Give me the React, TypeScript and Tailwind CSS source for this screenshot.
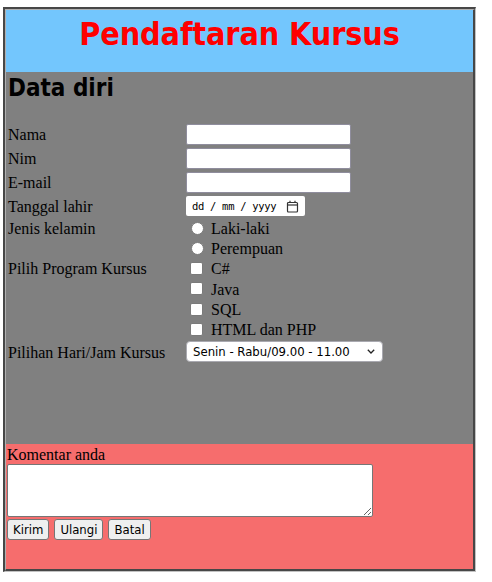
import React from "react";

const serif = { fontFamily: '"Liberation Serif", "Times New Roman", serif' };

function Radio() {
  return <span className="inline-block w-[13px] h-[13px] rounded-full bg-white border border-[#7a7a7a] ml-[5px] mr-[7px] shrink-0" />;
}
function Check() {
  return <span className="inline-block w-[13px] h-[13px] rounded-[2px] bg-white border border-[#7a7a7a] ml-[4px] mr-[8px] shrink-0" />;
}

export default function App() {
  return (
    <div className="ml-[3px] mt-[7px] w-[473px] h-[565px] border-t-2 border-l-2 border-r border-b border-t-[#474747] border-l-[#474747] border-r-[#c2c2c2] border-b-[#c2c2c2]">
      <div className="h-full flex flex-col border-t border-l border-r-2 border-b-2 border-t-[#b0b0b0] border-l-[#b0b0b0] border-r-[#474747] border-b-[#474747]">
        <header className="h-[62px] bg-[#73c6fd] flex justify-center">
          <h1
            className="text-[32px] font-bold text-[#ff0000] leading-[38px] mt-[5px] tracking-[-0.1px]"
            style={{ fontFamily: '"DejaVu Sans Condensed", "DejaVu Sans", Verdana, sans-serif' }}
          >
            Pendaftaran Kursus
          </h1>
        </header>

        <section className="h-[372px] bg-[#808080] text-black text-[16px]" style={serif}>
          <h2
            className="text-[24px] font-bold leading-[30px] pl-[2px] pt-[1px]"
            style={{ fontFamily: '"DejaVu Sans Condensed", "DejaVu Sans", Verdana, sans-serif' }}
          >
            Data diri
          </h2>
          <div className="mt-[19px] grid grid-cols-[180px_1fr] leading-[18px]">
            <div className="h-[24px] flex items-center pl-[2px] pt-[2px]">Nama</div>
            <div className="h-[24px] flex items-center">
              <input type="text" className="w-[165px] h-[21px] bg-white border border-[#8f8d9d] rounded-[2px]" />
            </div>
            <div className="h-[24px] flex items-center pl-[2px] pt-[2px]">Nim</div>
            <div className="h-[24px] flex items-center">
              <input type="text" className="w-[165px] h-[21px] bg-white border border-[#8f8d9d] rounded-[2px]" />
            </div>
            <div className="h-[24px] flex items-center pl-[2px] pt-[2px]">E-mail</div>
            <div className="h-[24px] flex items-center">
              <input type="email" className="w-[165px] h-[21px] bg-white border border-[#8f8d9d] rounded-[2px]" />
            </div>
            <div className="h-[24px] flex items-center pl-[2px] pt-[2px]">Tanggal lahir</div>
            <div className="h-[24px] flex items-center">
              <div className="w-[119px] h-[20px] bg-white rounded-[2px] flex items-center pl-[6px] pr-[6px] justify-between">
                <span className="text-[10.5px] text-black tracking-[-0.3px]" style={{ fontFamily: '"DejaVu Sans Mono", monospace' }}>
                  dd / mm / yyyy
                </span>
                <svg width="13" height="13" viewBox="0 0 13 13" fill="none" stroke="#333" strokeWidth="1.2">
                  <rect x="1.5" y="2.5" width="10" height="9.5" rx="1" />
                  <line x1="1.5" y1="5" x2="11.5" y2="5" />
                  <line x1="4" y1="0.8" x2="4" y2="3" />
                  <line x1="9" y1="0.8" x2="9" y2="3" />
                </svg>
              </div>
            </div>

            <div className="h-[20px] flex items-center pl-[2px] pt-[2px]">Jenis kelamin</div>
            <div className="h-[20px] flex items-center"><Radio /><span className="pt-[2px]">Laki-laki</span></div>
            <div className="h-[20px]" />
            <div className="h-[20px] flex items-center"><Radio /><span className="pt-[2px]">Perempuan</span></div>

            <div className="h-[20px] flex items-center pl-[2px] pt-[2px]">Pilih Program Kursus</div>
            <div className="h-[20px] flex items-center"><Check /><span className="pt-[2px]">C#</span></div>
            <div className="h-[21px]" />
            <div className="h-[21px] flex items-center"><Check /><span className="pt-[2px]">Java</span></div>
            <div className="h-[20px]" />
            <div className="h-[20px] flex items-center"><Check /><span className="pt-[2px]">SQL</span></div>
            <div className="h-[20px]" />
            <div className="h-[20px] flex items-center"><Check /><span className="pt-[2px]">HTML dan PHP</span></div>

            <div className="h-[25px] flex items-center pl-[2px] pt-[2px]">Pilihan Hari/Jam Kursus</div>
            <div className="h-[25px] flex items-center">
              <div className="relative w-[197px] h-[21px]">
                <select
                  className="appearance-none w-full h-full bg-white border border-[#a9a9b0] rounded-[4px] pl-[6px] text-[13px] text-black"
                  style={{ fontFamily: '"DejaVu Sans Condensed", "DejaVu Sans", Tahoma, sans-serif' }}
                  defaultValue="a"
                >
                  <option value="a">Senin - Rabu/09.00 - 11.00</option>
                </select>
                <svg className="absolute right-[8px] top-[8px] pointer-events-none" width="8" height="5" viewBox="0 0 8 5" fill="none" stroke="#222" strokeWidth="1.3">
                  <polyline points="0.8,0.8 4,4 7.2,0.8" />
                </svg>
              </div>
            </div>
          </div>
        </section>

        <section className="flex-1 bg-[#f66d6d] text-black text-[16px] pl-[1px]" style={serif}>
          <div className="leading-[18px] pt-[2px]">Komentar anda</div>
          <textarea className="block w-[366px] h-[53px] bg-white border border-[#767676] rounded-[2px] resize-both mt-[0px]" />
          <div
            className="flex gap-[5px] mt-[2px] text-[13px]"
            style={{ fontFamily: '"DejaVu Sans Condensed", "DejaVu Sans", Tahoma, sans-serif' }}
          >
            <button className="h-[21px] px-[5px] bg-[#efefef] border border-[#767676] rounded-[3px] leading-none">Kirim</button>
            <button className="h-[21px] px-[5px] bg-[#efefef] border border-[#767676] rounded-[3px] leading-none">Ulangi</button>
            <button className="h-[21px] px-[5px] bg-[#efefef] border border-[#767676] rounded-[3px] leading-none">Batal</button>
          </div>
        </section>
      </div>
    </div>
  );
}
